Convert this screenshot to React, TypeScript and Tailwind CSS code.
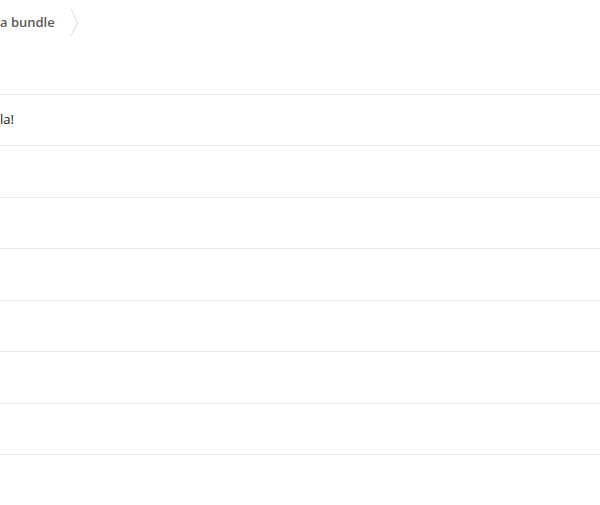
export default function App() {
  const rows = ['la!', '', '', '', '', '', '']

  return (
    <div className="w-[600px] h-[505px] bg-white overflow-hidden" style={{ fontFamily: '"Open Sans", sans-serif' }}>
      {/* breadcrumb */}
      <div className="h-[45px] flex items-center">
        <span className="text-[13px] font-semibold text-[#5a5a5a]">a bundle</span>
        <svg className="ml-[15px]" width="10" height="30" viewBox="0 0 10 30" aria-hidden>
          <path d="M1 1 L7.5 14.5 L1 28" fill="none" stroke="#dcdcdc" strokeWidth="1" />
        </svg>
      </div>

      {/* list */}
      <div className="mt-[49px] border-t border-[#e8e8e8]">
        {rows.map((text, i) => (
          <div key={i} className="h-[51.43px] border-b border-[#e8e8e8] flex items-center">
            <span className="text-[13px] text-[#111]">{text}</span>
          </div>
        ))}
      </div>
    </div>
  )
}
